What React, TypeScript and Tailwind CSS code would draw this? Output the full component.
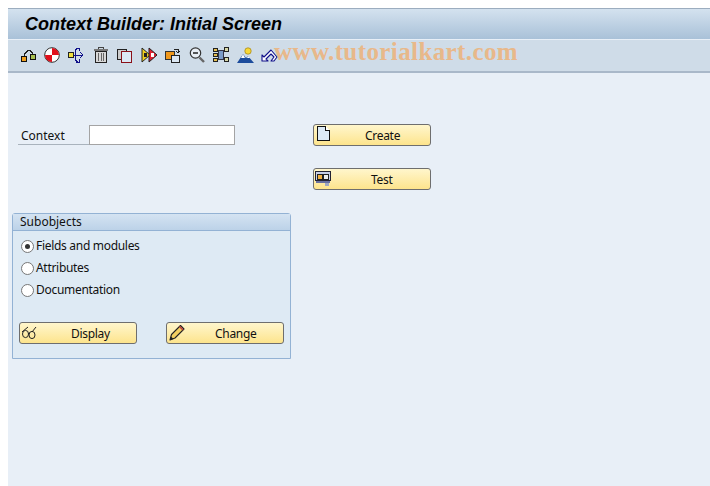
import React from "react";

const Svg = ({ children, w = 16, h = 16 }: { children: React.ReactNode; w?: number; h?: number }) => (
  <svg width={w} height={h} viewBox={`0 0 ${w} ${h}`} shapeRendering="crispEdges" className="block shrink-0">
    {children}
  </svg>
);

const toolbarIcons: React.ReactNode[] = [
  <Svg key="a">
    <rect x="1.5" y="9.5" width="5" height="5" fill="#f0a020" stroke="#111" />
    <rect x="10.5" y="7.5" width="5" height="5" fill="#a8c050" stroke="#111" />
    <path d="M4 9V6H5V5H6V4H7V3H10V4H11V5H12V7" fill="none" stroke="#222" />
  </Svg>,
  <svg key="b" width="16" height="16" viewBox="0 0 16 16" className="block shrink-0">
    <circle cx="8" cy="8" r="7.3" fill="#fff" stroke="#333" strokeWidth="1" />
    <path d="M8 1A7 7 0 0 1 15 8H8ZM8 8V15A7 7 0 0 1 1 8Z" fill="#e0101c" />
  </svg>,
  <Svg key="c">
    <rect x="0.5" y="5.5" width="5" height="5" fill="#f0e040" stroke="#222" />
    <path d="M6 8H15M12 5L15 8L12 11M7 3L10 1M7 3V13L10 15M8 1H11V4M8 15H11V12" fill="none" stroke="#10108a" />
  </Svg>,
  <Svg key="d" w={14}>
    <rect x="0" y="2" width="14" height="2" fill="#777" />
    <path d="M4.5 2V0.5H9.5V2" fill="none" stroke="#444" />
    <rect x="1.5" y="4.5" width="11" height="11" fill="#d8d8d8" stroke="#222" />
    <path d="M4.5 6V14M7 6V14M9.5 6V14" stroke="#666" fill="none" />
  </Svg>,
  <Svg key="e">
    <rect x="0.5" y="2.5" width="9" height="10" fill="#ccc" stroke="#222" />
    <rect x="4.5" y="4.5" width="10" height="11" fill="#dce8f4" stroke="#8a1018" />
  </Svg>,
  <svg key="f" width="17" height="16" viewBox="0 0 17 16" className="block shrink-0">
    <path d="M1 1L9 8L1 15Z" fill="#f0d020" stroke="#222" />
    <path d="M8 1L16 8L8 15Z" fill="#e02030" stroke="#222" />
    <rect x="3" y="6" width="3" height="4" fill="#222" />
    <rect x="10" y="6" width="3" height="4" fill="#fff" />
  </svg>,
  <Svg key="g">
    <rect x="0.5" y="4.5" width="9" height="8" fill="#f0981c" stroke="#333" />
    <rect x="6.5" y="8.5" width="8" height="7" fill="#dce8f4" stroke="#222" />
    <path d="M9 2H13V6M11 4L13 6L15 4" fill="none" stroke="#222" />
  </Svg>,
  <svg key="h" width="16" height="16" viewBox="0 0 16 16" className="block shrink-0">
    <circle cx="6.5" cy="6" r="5.2" fill="#e8eef4" stroke="#333" strokeWidth="1.2" />
    <path d="M4 6H9" stroke="#222" strokeWidth="1.5" />
    <path d="M10.5 10.5L15 15" stroke="#666" strokeWidth="2.4" />
  </svg>,
  <Svg key="i">
    <rect x="0.5" y="1.5" width="4" height="3" fill="#e8c050" stroke="#222" />
    <rect x="0.5" y="6.5" width="4" height="3" fill="#e8c050" stroke="#222" />
    <rect x="0.5" y="11.5" width="4" height="3" fill="#e8c050" stroke="#222" />
    <rect x="5.5" y="3.5" width="5" height="9" fill="#7c9cc8" stroke="#334" />
    <rect x="11.5" y="0.5" width="4" height="4" fill="#d8d8a8" stroke="#222" />
    <rect x="11.5" y="10.5" width="4" height="4" fill="#d8d8a8" stroke="#222" />
  </Svg>,
  <svg key="j" width="17" height="16" viewBox="0 0 17 16" className="block shrink-0">
    <circle cx="11" cy="4" r="3.2" fill="#f8d838" stroke="#a08010" strokeWidth="0.7" />
    <path d="M0 16L6 7L9 11L11 9L17 16Z" fill="#1c4c9c" />
    <path d="M6 7L4 11H8ZM11 9L10 11H13Z" fill="#fff" />
  </svg>,
  <svg key="k" width="17" height="16" viewBox="0 0 17 16" className="block shrink-0">
    <path d="M1 8V14H7L5 12L10 7L13 10L10 14H13L16 10L10 3L3 10Z" fill="#fff" stroke="#10108a" strokeWidth="1.1" strokeLinejoin="round" />
  </svg>,
];

const DocIcon = () => (
  <Svg w={13} h={15}>
    <path d="M0.5 0.5H8.5L12.5 4.5V14.5H0.5Z" fill="#dceaf6" stroke="#111" />
    <path d="M8.5 0.5V4.5H12.5" fill="#fff" stroke="#111" />
  </Svg>
);

const TestIcon = () => (
  <Svg w={16} h={17}>
    <rect x="0.5" y="1.5" width="15" height="9" fill="#c8d0e8" stroke="#223" />
    <rect x="2.5" y="4.5" width="5" height="5" fill="#f0b040" stroke="#222" />
    <rect x="8.5" y="4.5" width="5" height="5" fill="#eeeeee" stroke="#222" />
    <rect x="1" y="11" width="14" height="2" fill="#6870a0" />
    <rect x="10" y="13" width="4" height="3" fill="#a0a8c0" />
  </Svg>
);

const GlassesIcon = () => (
  <svg width="17" height="14" viewBox="0 0 17 14" className="block shrink-0">
    <path d="M1 6L7 1M7 8L9 7M11 6L15 1" fill="none" stroke="#222" strokeWidth="1" />
    <ellipse cx="4.5" cy="8" rx="3" ry="3.6" fill="none" stroke="#222" strokeWidth="1" />
    <ellipse cx="11" cy="9" rx="3" ry="3.6" fill="none" stroke="#222" strokeWidth="1" />
  </svg>
);

const PencilIcon = () => (
  <svg width="16" height="17" viewBox="0 0 16 17" className="block shrink-0">
    <path d="M1 16L2.5 10.5L11.5 1.5L15 5L6 14Z" fill="#f4d060" stroke="#222" strokeWidth="1.1" strokeLinejoin="round" />
    <path d="M10.5 2.5L14 6" stroke="#c04040" strokeWidth="1.6" />
    <path d="M1 16L2 12.5L4.5 15Z" fill="#222" />
  </svg>
);

const SapButton = ({
  icon,
  label,
  className,
  labelClass,
}: {
  icon: React.ReactNode;
  label: string;
  className: string;
  labelClass: string;
}) => (
  <div
    className={`relative flex items-center h-[22px] rounded-[3px] border border-[#6e6e6e] bg-gradient-to-b from-[#fff6cc] to-[#fde48c] text-[12px] tracking-[-0.3px] text-[#111] ${className}`}
  >
    <div className="absolute left-[1px] top-[1px]">{icon}</div>
    <span className={`absolute top-[2px] ${labelClass}`}>{label}</span>
  </div>
);

const Radio = ({ label, checked }: { label: string; checked?: boolean }) => (
  <div className="flex items-center h-[22px]">
    <div className="flex items-center justify-center w-[13px] h-[13px] rounded-full border border-[#777] bg-white mr-[2px]">
      {checked && <div className="w-[5px] h-[5px] rounded-full bg-[#333]" />}
    </div>
    <span className="text-[12px] tracking-[-0.3px] text-[#111]">{label}</span>
  </div>
);

export default function App() {
  return (
    <div
      className="w-[710px] h-[486px] overflow-hidden bg-white pl-[8px] pt-[8px] relative"
      style={{ fontFamily: '"Noto Sans", Tahoma, sans-serif' }}
    >
      <div className="h-[478px] flex flex-col bg-[#e8eff7]">
        <div className="h-[31px] flex items-center pl-[17px] border-t border-[#9cadbf] bg-gradient-to-b from-[#d4e2ef] to-[#a9c1d8]">
          <h1
            className="text-[18px] font-bold italic text-black leading-none"
            style={{ fontFamily: '"Liberation Sans", Arial, sans-serif' }}
          >
            Context Builder: Initial Screen
          </h1>
        </div>
        <div className="h-[34px] flex items-center pl-[12px] pb-[2px] border-t border-[#e8eff7] border-b-2 border-b-[#a9b8c9] bg-[#cfdce8]">
          {toolbarIcons.map((icon, i) => (
            <div key={i} className={i === 3 ? "w-[25px] pl-[2px] flex justify-start" : "w-[24px] flex justify-start"}>
              {icon}
            </div>
          ))}
        </div>

        <div className="flex flex-1 pl-[4px] pt-[51px]">
          <div className="w-[279px] pt-[1px]">
            <div className="flex items-start h-[88px] pl-[6px]">
              <label className="w-[71px] h-[20px] pl-[3px] border-b border-[#a9b3bd] text-[12px] leading-[21px] text-[#111]">
                Context
              </label>
              <div className="w-[146px] h-[20px] bg-white border border-[#a4a4a4]" />
            </div>
            <section className="w-[279px] h-[146px] border border-[#93b2d4] rounded-t-[3px] bg-[#deeaf4]">
              <div className="h-[17px] pl-[7px] text-[12px] leading-[16px] text-[#111] border-b border-[#93b2d4] bg-gradient-to-b from-[#d4e3f2] to-[#bcd2e8]">
                Subobjects
              </div>
              <div className="pl-[8px] pt-[4px]">
                <Radio label="Fields and modules" checked />
                <Radio label="Attributes" />
                <Radio label="Documentation" />
              </div>
              <div className="flex pl-[6px] gap-[29px] pt-[21px]">
                <SapButton icon={<div className="pt-[2px]"><GlassesIcon /></div>} label="Display" className="w-[118px]" labelClass="left-[51px]" />
                <SapButton icon={<div className="pl-[1px]"><PencilIcon /></div>} label="Change" className="w-[118px]" labelClass="left-[48px]" />
              </div>
            </section>
          </div>
          <div className="ml-[22px] flex flex-col gap-[22px]">
            <SapButton icon={<div className="pl-[2px]"><DocIcon /></div>} label="Create" className="w-[118px]" labelClass="left-[51px]" />
            <SapButton icon={<TestIcon />} label="Test" className="w-[118px]" labelClass="left-[57px]" />
          </div>
        </div>
      </div>
      <div
        className="absolute left-[274px] top-[38px] text-[25px] font-bold leading-[28px] text-[#e8b88a] tracking-[0.4px]"
        style={{ fontFamily: '"Liberation Serif", "Times New Roman", serif' }}
      >
        www.tutorialkart.com
      </div>
    </div>
  );
}
